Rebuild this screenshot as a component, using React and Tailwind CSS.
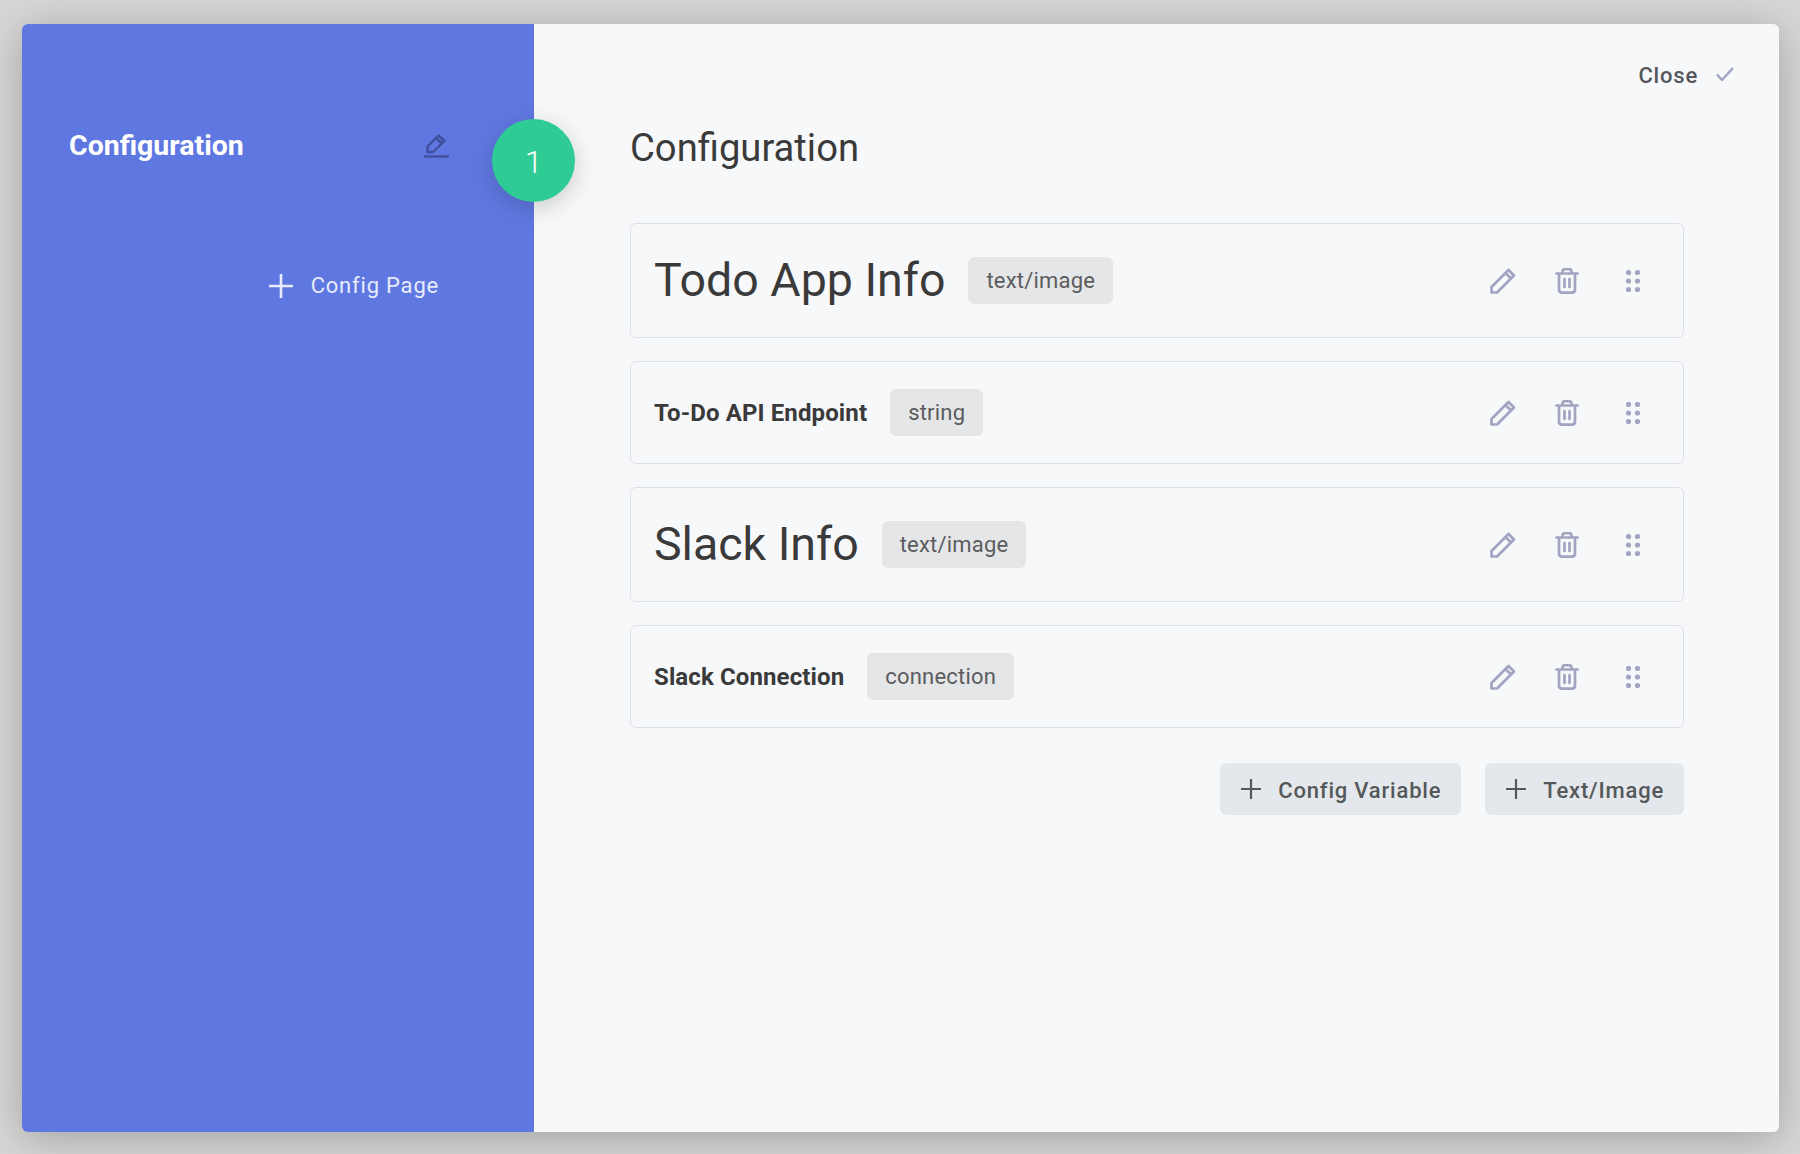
const rows = [
  { title: 'Todo App Info', tag: 'text/image', big: true },
  { title: 'To-Do API Endpoint', tag: 'string' },
  { title: 'Slack Info', tag: 'text/image', big: true },
  { title: 'Slack Connection', tag: 'connection' },
];

function PencilIcon() {
  return (
    <svg width="26" height="26" viewBox="0 0 26 26" fill="none" stroke="#a2a4c2" strokeWidth="2.7" strokeLinejoin="round">
      <path d="M1.5 24.5V19L18.5 2L24 7.5L7 24.5Z" />
      <path d="M15.5 5L21 10.5" />
    </svg>
  );
}

function TrashIcon() {
  return (
    <svg width="24" height="26" viewBox="0 0 24 26" fill="none" stroke="#a2a4c2" strokeWidth="2.7" strokeLinecap="round" strokeLinejoin="round">
      <path d="M1.5 5.5H22.5" />
      <path d="M7.5 5V3.8C7.5 2.2 8.7 1.2 10 1.2H14C15.3 1.2 16.5 2.2 16.5 3.8V5" />
      <path d="M4 6V21.5C4 23.4 5.1 24.6 7 24.6H17C18.9 24.6 20 23.4 20 21.5V6" />
      <path d="M9.5 11V19M14.5 11V19" />
    </svg>
  );
}

function DotsIcon() {
  return (
    <svg width="14" height="22" viewBox="0 0 14 22" fill="#a2a4c2">
      <circle cx="2.5" cy="2.5" r="2.6" />
      <circle cx="11.5" cy="2.5" r="2.6" />
      <circle cx="2.5" cy="11" r="2.6" />
      <circle cx="11.5" cy="11" r="2.6" />
      <circle cx="2.5" cy="19.5" r="2.6" />
      <circle cx="11.5" cy="19.5" r="2.6" />
    </svg>
  );
}

function PlusIcon({ size = 20, color = '#55585a' }) {
  return (
    <svg width={size} height={size} viewBox="0 0 20 20" stroke={color} strokeWidth="2.2" fill="none">
      <path d="M10 0V20M0 10H20" />
    </svg>
  );
}

function Row({ title, tag, big }) {
  return (
    <div className={`flex items-center rounded-md border border-[#dde0e4] pl-[23px] pr-[43px] ${big ? 'h-[115px]' : 'h-[103px]'}`}>
      <span className={big ? 'text-[46.5px] text-[#3a3a3a] leading-none' : 'text-[24px] font-bold tracking-[0.12px] text-[#3a3a3a]'}>{title}</span>
      <span className="ml-[23px] flex h-[47px] items-center rounded-md bg-[#e5e6e7] px-[18px] text-[22px] tracking-[0.2px] text-[#5a5c5e]">{tag}</span>
      <div className="ml-auto flex items-center">
        <PencilIcon />
        <span className="ml-[39px]"><TrashIcon /></span>
        <span className="ml-[47px]"><DotsIcon /></span>
      </div>
    </div>
  );
}

export default function App() {
  return (
    <div className="h-screen overflow-hidden bg-[#d7d8d6] pl-[22px] pt-6 font-['Roboto',sans-serif]">
      <div className="relative flex h-[1108px] w-[1757px] rounded-md shadow-[0_6px_42px_rgba(0,0,0,0.25)]">
        {/* left panel */}
        <div className="w-[512px] shrink-0 rounded-l-md bg-[#5f78e1] pt-[104px]">
          <div className="flex h-9 items-center justify-between pl-[47px] pr-[85px]">
            <span className="text-[28.5px] font-bold leading-none text-white">Configuration</span>
            <svg className="-mt-0.5" width="25" height="25" viewBox="0 0 25 25" fill="none" stroke="#3f4f9d" strokeWidth="2.4" strokeLinejoin="round">
              <path d="M3.5 19V13.5L14.5 2.5L20.5 8L9 19Z" />
              <path d="M12 5L18 10.5" />
              <path d="M0 23.5H25" />
            </svg>
          </div>
          <div className="mt-[105px] flex items-center justify-end pr-[95px] text-[22px] tracking-[0.8px] text-white/85">
            <PlusIcon size={24} color="rgba(255,255,255,0.85)" />
            <span className="ml-[18px]">Config Page</span>
          </div>
        </div>

        {/* main panel */}
        <div className="flex-1 rounded-r-md bg-[#f7f8fa] pt-9">
          <div className="flex h-[30px] items-center justify-end pr-[45px]">
            <span className="text-[22px] font-medium tracking-[0.8px] text-[#55575a]">Close</span>
            <svg className="ml-[18px] -mt-0.5" width="18" height="14" viewBox="0 0 18 14" fill="none" stroke="#a2a4c2" strokeWidth="2.4">
              <path d="M1 7.5L6 13L17 1" />
            </svg>
          </div>
          <div className="pl-24 pr-[95px]">
            <h1 className="mt-[34px] text-[38.2px] leading-[48px] text-[#3a3a3a]">Configuration</h1>
            <div className="mt-[51px] flex flex-col gap-[23px]">
              {rows.map((row) => <Row key={row.title} {...row} />)}
            </div>
            <div className="mt-[35px] flex justify-end gap-6">
              {['Config Variable', 'Text/Image'].map((label) => (
                <div key={label} className="flex h-[52px] items-center rounded-md bg-[#e4e8ec] pl-[21px] pr-5 text-[22px] font-medium tracking-[0.8px] text-[#55585a]">
                  <PlusIcon />
                  <span className="ml-[17px] pt-0.5">{label}</span>
                </div>
              ))}
            </div>
          </div>
        </div>

        {/* step badge */}
        <div className="absolute left-[470px] top-[95px] flex h-[83px] w-[83px] items-center justify-center rounded-full bg-[#2ecc94] pt-0.5 text-[32px] font-light text-white shadow-[0_6px_24px_rgba(0,0,0,0.18)]">1</div>
      </div>
    </div>
  );
}
